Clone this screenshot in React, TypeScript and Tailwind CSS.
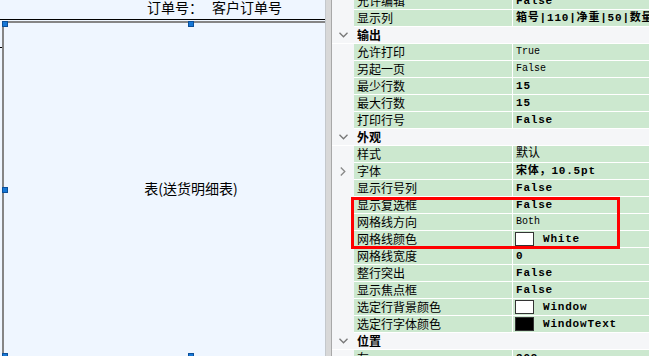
import React from 'react';

type Row =
  | { kind: 'cat'; label: string }
  | { kind: 'prop'; label: string; value: string; bold?: boolean; cjkValue?: boolean; swatch?: 'white' | 'black'; chevron?: boolean };

const rows: Row[] = [
  { kind: 'prop', label: '允许编辑', value: 'False', bold: true },
  { kind: 'prop', label: '显示列', value: '箱号|110|净重|50|数量|60|备注', bold: true },
  { kind: 'cat', label: '输出' },
  { kind: 'prop', label: '允许打印', value: 'True' },
  { kind: 'prop', label: '另起一页', value: 'False' },
  { kind: 'prop', label: '最少行数', value: '15', bold: true },
  { kind: 'prop', label: '最大行数', value: '15', bold: true },
  { kind: 'prop', label: '打印行号', value: 'False', bold: true },
  { kind: 'cat', label: '外观' },
  { kind: 'prop', label: '样式', value: '默认', cjkValue: true },
  { kind: 'prop', label: '字体', value: '宋体，10.5pt', bold: true, chevron: true },
  { kind: 'prop', label: '显示行号列', value: 'False', bold: true },
  { kind: 'prop', label: '显示复选框', value: 'False', bold: true },
  { kind: 'prop', label: '网格线方向', value: 'Both' },
  { kind: 'prop', label: '网格线颜色', value: 'White', bold: true, swatch: 'white' },
  { kind: 'prop', label: '网格线宽度', value: '0', bold: true },
  { kind: 'prop', label: '整行突出', value: 'False', bold: true },
  { kind: 'prop', label: '显示焦点框', value: 'False', bold: true },
  { kind: 'prop', label: '选定行背景颜色', value: 'Window', bold: true, swatch: 'white' },
  { kind: 'prop', label: '选定行字体颜色', value: 'WindowText', bold: true, swatch: 'black' },
  { kind: 'cat', label: '位置' },
  { kind: 'prop', label: '左', value: '309', bold: true },
];

const cjk = { fontFamily: '"Noto Sans CJK SC", sans-serif' };
const mono = { fontFamily: '"Liberation Mono", "Noto Sans CJK SC", monospace' };

const Handle: React.FC<{ className: string }> = ({ className }) => (
  <div className={`absolute w-[6px] h-[6px] bg-[#1677d6] border border-[#0b4f99] ${className}`} />
);

const ChevronDown = () => (
  <svg width="9" height="6" viewBox="0 0 9 6" className="text-[#777]">
    <path d="M0.5 0.8 L4.5 4.8 L8.5 0.8" fill="none" stroke="currentColor" strokeWidth="1.3" />
  </svg>
);

const ChevronRight = () => (
  <svg width="6" height="9" viewBox="0 0 6 9" className="text-[#888]">
    <path d="M0.8 0.5 L4.8 4.5 L0.8 8.5" fill="none" stroke="currentColor" strokeWidth="1.3" />
  </svg>
);

const PropRow: React.FC<{ row: Row }> = ({ row }) => {
  if (row.kind === 'cat') {
    return (
      <div className="flex h-[17px] bg-[#f5f6f8] border-b border-white">
        <div className="w-[22px] flex items-center justify-center"><ChevronDown /></div>
        <div className="pl-[3px] flex items-center text-[12px] font-bold text-black leading-none" style={cjk}>{row.label}</div>
      </div>
    );
  }
  const size = row.cjkValue ? 'text-[12px]' : row.bold ? 'font-bold text-[11px] tracking-[0.8px]' : 'text-[10px]';
  return (
    <div className="flex h-[17px]">
      <div className="w-[22px] bg-[#f5f6f8] flex items-center justify-center">{row.chevron && <ChevronRight />}</div>
      <div className="w-[158px] bg-[#cce8cf] border-b border-white pl-[3px] flex items-center text-[12px] text-black leading-none whitespace-nowrap" style={cjk}>
        {row.label}
      </div>
      <div className="w-px bg-white" />
      <div className="flex-1 bg-[#cce8cf] border-b border-white pl-[2px] flex items-center gap-[8px] text-black whitespace-nowrap overflow-hidden leading-none" style={mono}>
        {row.swatch && (
          <div className={`w-[19px] h-[14px] border border-[#333] ${row.swatch === 'black' ? 'bg-black' : 'bg-white'}`} />
        )}
        <span className={`pl-[1px] ${size}`}>{row.value}</span>
      </div>
    </div>
  );
};

export default function App() {
  return (
    <div className="w-[649px] h-[356px] flex overflow-hidden bg-white">
      {/* designer canvas */}
      <div className="relative w-[326px] h-full bg-[#eff6ff] border-r border-[#c4c8cc] flex flex-col overflow-hidden">
        <div className="h-[20px] shrink-0 border-b border-black flex pl-[147px] text-[14px] leading-[14px] text-black" style={cjk}>
          <span>订单号：</span>
          <span className="pl-[9px]">客户订单号</span>
        </div>
        <div className="absolute left-0 top-[47px] w-[3px] h-px bg-black" />
        <div className="relative flex-1 w-[376px] shrink-0 mt-[1px] ml-[2px] border-l-2 border-t-2 border-[#858585] flex items-center justify-center">
          <span className="text-[14px] text-black -mt-[2px]" style={cjk}>表(送货明细表)</span>
          <Handle className="-left-[2px] -top-[2px]" />
          <Handle className="left-[184px] -top-[2px]" />
          <Handle className="-left-[2px] top-[164px]" />
          <Handle className="-left-[2px] top-[330px]" />
          <Handle className="left-[184px] top-[330px]" />
        </div>
      </div>
      {/* splitter */}
      <div className="w-[6px] h-full bg-[#d8d8d8] border-r border-[#a8a8a8]" />
      {/* property grid */}
      <div className="relative flex-1 h-full bg-[#f5f6f8] overflow-hidden">
        <div className="-mt-[7px]">
          {rows.map((r, i) => (
            <PropRow key={i} row={r} />
          ))}
        </div>
        <div className="absolute left-[19px] top-[197px] w-[269px] h-[52px] border-[3px] border-[#ff0000]" />
      </div>
    </div>
  );
}
